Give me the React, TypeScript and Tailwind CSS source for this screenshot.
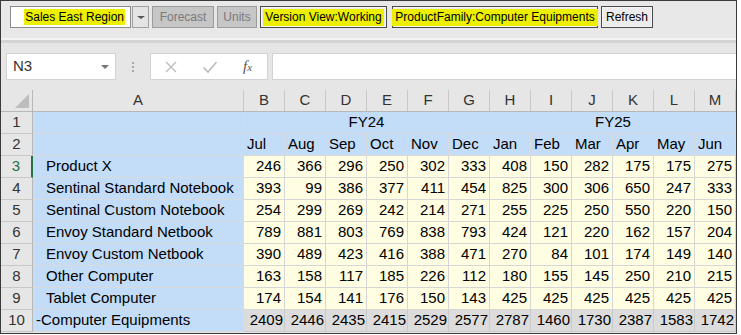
import React from 'react';

const cols = ['B', 'C', 'D', 'E', 'F', 'G', 'H', 'I', 'J', 'K', 'L', 'M'];
const months = ['Jul', 'Aug', 'Sep', 'Oct', 'Nov', 'Dec', 'Jan', 'Feb', 'Mar', 'Apr', 'May', 'Jun'];

const rows: { label: string; values: number[] }[] = [
  { label: 'Product X', values: [246, 366, 296, 250, 302, 333, 408, 150, 282, 175, 175, 275] },
  { label: 'Sentinal Standard Notebook', values: [393, 99, 386, 377, 411, 454, 825, 300, 306, 650, 247, 333] },
  { label: 'Sentinal Custom Notebook', values: [254, 299, 269, 242, 214, 271, 255, 225, 250, 550, 220, 150] },
  { label: 'Envoy Standard Netbook', values: [789, 881, 803, 769, 838, 793, 424, 121, 220, 162, 157, 204] },
  { label: 'Envoy Custom Netbook', values: [390, 489, 423, 416, 388, 471, 270, 84, 101, 174, 149, 140] },
  { label: 'Other Computer', values: [163, 158, 117, 185, 226, 112, 180, 155, 145, 250, 210, 215] },
  { label: 'Tablet Computer', values: [174, 154, 141, 176, 150, 143, 425, 425, 425, 425, 425, 425] },
];
const totals = [2409, 2446, 2435, 2415, 2529, 2577, 2787, 1460, 1730, 2387, 1583, 1742];

const RowHead = ({ n, active }: { n: number; active?: boolean }) => (
  <div
    className={`w-[32px] shrink-0 flex items-center justify-center bg-[#e6e6e6] border-b border-[#c8c8c8] ${
      active ? 'border-r-2 border-r-[#217346] text-[#217346]' : 'border-r border-r-[#b8b8b8] text-[#333]'
    }`}
  >
    {n}
  </div>
);

const ToolBox = ({ children, className }: { children: React.ReactNode; className: string }) => (
  <div className={`h-[22px] shrink-0 whitespace-nowrap flex items-center justify-center border ${className}`}>{children}</div>
);

export default function App() {
  return (
    <div className="w-[741px] h-[335px] bg-white">
      <div className="w-[737px] h-[334px] border border-[#3a3a3a] bg-[#e6e6e6] overflow-hidden flex flex-col font-['Liberation_Sans',Arial,sans-serif]">
        {/* toolbar */}
        <div className="h-[37px] shrink-0 bg-[#e8e8e8] flex items-start pt-[5px] pl-[9px] text-[12px] text-black">
          <div className="flex h-[22px] w-[121px] shrink-0 bg-white border border-[#8c8c8c] items-center justify-end pr-[5px] whitespace-nowrap">
            <span className="bg-[#ecf000] px-[1px] leading-[16px]">Sales East Region</span>
          </div>
          <div className="ml-[1px] h-[22px] w-[17px] shrink-0 bg-[#e4e4e4] border border-[#a0a0a0] flex items-center justify-center">
            <div className="w-0 h-0 border-l-[4px] border-r-[4px] border-t-[3px] border-l-transparent border-r-transparent border-t-[#555]" />
          </div>
          <ToolBox className="ml-[3px] w-[62px] bg-[#c6c6c6] border-[#9c9c9c] text-[#7a7a7a]">Forecast</ToolBox>
          <ToolBox className="ml-[3px] w-[40px] bg-[#c6c6c6] border-[#9c9c9c] text-[#7a7a7a]">Units</ToolBox>
          <ToolBox className="ml-[3px] w-[127px] bg-[#ececec] border-[#4a4a4a] shadow-[inset_0_0_0_1px_#f4f4f4]">
            <span className="bg-[#ecf000] px-[2px] leading-[17px]">Version View:Working</span>
          </ToolBox>
          <ToolBox className="ml-[5px] w-[206px] bg-[#ececec] border-[#4a4a4a] shadow-[inset_0_0_0_1px_#f4f4f4]">
            <span className="bg-[#ecf000] px-[3px] leading-[17px]">ProductFamily:Computer Equipments</span>
          </ToolBox>
          <ToolBox className="ml-[3px] w-[52px] bg-[#ececec] border-[#4a4a4a] shadow-[inset_0_0_0_1px_#f4f4f4]">Refresh</ToolBox>
        </div>
        <div className="h-[2px] shrink-0 bg-[#f4f4f4]" />
        <div className="h-[3px] shrink-0 bg-[#d4d4d4]" />

        {/* formula bar */}
        <div className="h-[47px] shrink-0 flex items-start pt-[10px] text-[#333]">
          <div className="ml-[5px] w-[110px] h-[27px] bg-white border border-[#d2d2d2] flex items-center justify-between pl-[6px] pr-[6px] text-[15px]">
            <span>N3</span>
            <div className="w-0 h-0 border-l-[4px] border-r-[4px] border-t-[4px] border-l-transparent border-r-transparent border-t-[#777]" />
          </div>
          <div className="w-[34px] h-[27px] flex flex-col items-center justify-center gap-[2px]">
            <div className="w-[2px] h-[2px] bg-[#a8a8a8]" />
            <div className="w-[2px] h-[2px] bg-[#a8a8a8]" />
            <div className="w-[2px] h-[2px] bg-[#a8a8a8]" />
          </div>
          <div className="w-[118px] h-[27px] bg-white border border-[#d2d2d2] flex items-center">
            <svg width="14" height="14" viewBox="0 0 14 14" className="ml-[13px]">
              <path d="M2 2 L12 12 M12 2 L2 12" stroke="#bcbcbc" strokeWidth="1.4" />
            </svg>
            <svg width="16" height="14" viewBox="0 0 16 14" className="ml-[24px]">
              <path d="M1.5 7.5 L6 12 L14.5 2" stroke="#bcbcbc" strokeWidth="1.6" fill="none" />
            </svg>
            <span className="ml-[25px] font-['Liberation_Serif',serif] italic text-[15px] text-[#555]">
              f<span className="text-[11px]">x</span>
            </span>
          </div>
          <div className="ml-[4px] flex-1 h-[27px] bg-white border-y border-l border-[#d2d2d2]" />
        </div>

        {/* grid */}
        <div className="flex-1 flex flex-col text-[15px] text-black">
          {/* column headers */}
          <div className="flex h-[22px] shrink-0 bg-[#e6e6e6] text-[#333] border-b border-[#b8b8b8]">
            <div className="w-[32px] shrink-0 border-r border-[#b8b8b8] relative">
              <svg width="14" height="14" className="absolute right-[3px] bottom-[3px]">
                <path d="M14 0 L14 14 L0 14 Z" fill="#bdbdbd" />
              </svg>
            </div>
            <div className="w-[211px] shrink-0 flex items-center justify-center border-r border-[#c8c8c8]">A</div>
            {cols.map((c) => (
              <div key={c} className="w-[41px] shrink-0 flex items-center justify-center border-r border-[#c8c8c8]">
                {c}
              </div>
            ))}
          </div>

          {/* row 1 */}
          <div className="flex h-[22px] shrink-0">
            <RowHead n={1} />
            <div className="w-[211px] shrink-0 bg-[#c3dcf8] border-r border-b border-[#d8dadc]" />
            <div className="w-[246px] shrink-0 bg-[#c3dcf8] border-r border-b border-[#d8dadc] flex items-center justify-center">FY24</div>
            <div className="w-[246px] shrink-0 bg-[#c3dcf8] border-b border-[#d8dadc] flex items-center justify-center">FY25</div>
          </div>

          {/* row 2 */}
          <div className="flex h-[22px] shrink-0">
            <RowHead n={2} />
            <div className="w-[211px] shrink-0 bg-[#c3dcf8] border-r border-b border-[#d8dadc]" />
            {months.map((m) => (
              <div key={m} className="w-[41px] shrink-0 bg-[#c3dcf8] border-r border-b border-[#d8dadc] flex items-center pl-[3px]">
                {m}
              </div>
            ))}
          </div>

          {rows.map((r, i) => (
            <div key={r.label} className="flex h-[22px] shrink-0">
              <RowHead n={i + 3} active={i === 0} />
              <div className="w-[211px] shrink-0 bg-[#c3dcf8] border-r border-b border-[#d8dadc] flex items-center pl-[13px] whitespace-nowrap">
                {r.label}
              </div>
              {r.values.map((v, j) => (
                <div
                  key={j}
                  className="w-[41px] shrink-0 bg-[#fffde2] border-r border-b border-[#d6d6d6] flex items-center justify-end pr-[3px]"
                >
                  {v}
                </div>
              ))}
            </div>
          ))}

          {/* total row */}
          <div className="flex h-[22px] shrink-0">
            <RowHead n={10} />
            <div className="w-[211px] shrink-0 bg-[#c3dcf8] border-r border-b border-[#d8dadc] flex items-center pl-[3px] whitespace-nowrap">
              -Computer Equipments
            </div>
            {totals.map((v, j) => (
              <div
                key={j}
                className="w-[41px] shrink-0 bg-[#dcdcdc] border-r border-b border-[#cacaca] flex items-center justify-end pr-[1px]"
              >
                {v}
              </div>
            ))}
          </div>
        </div>
      </div>
    </div>
  );
}
